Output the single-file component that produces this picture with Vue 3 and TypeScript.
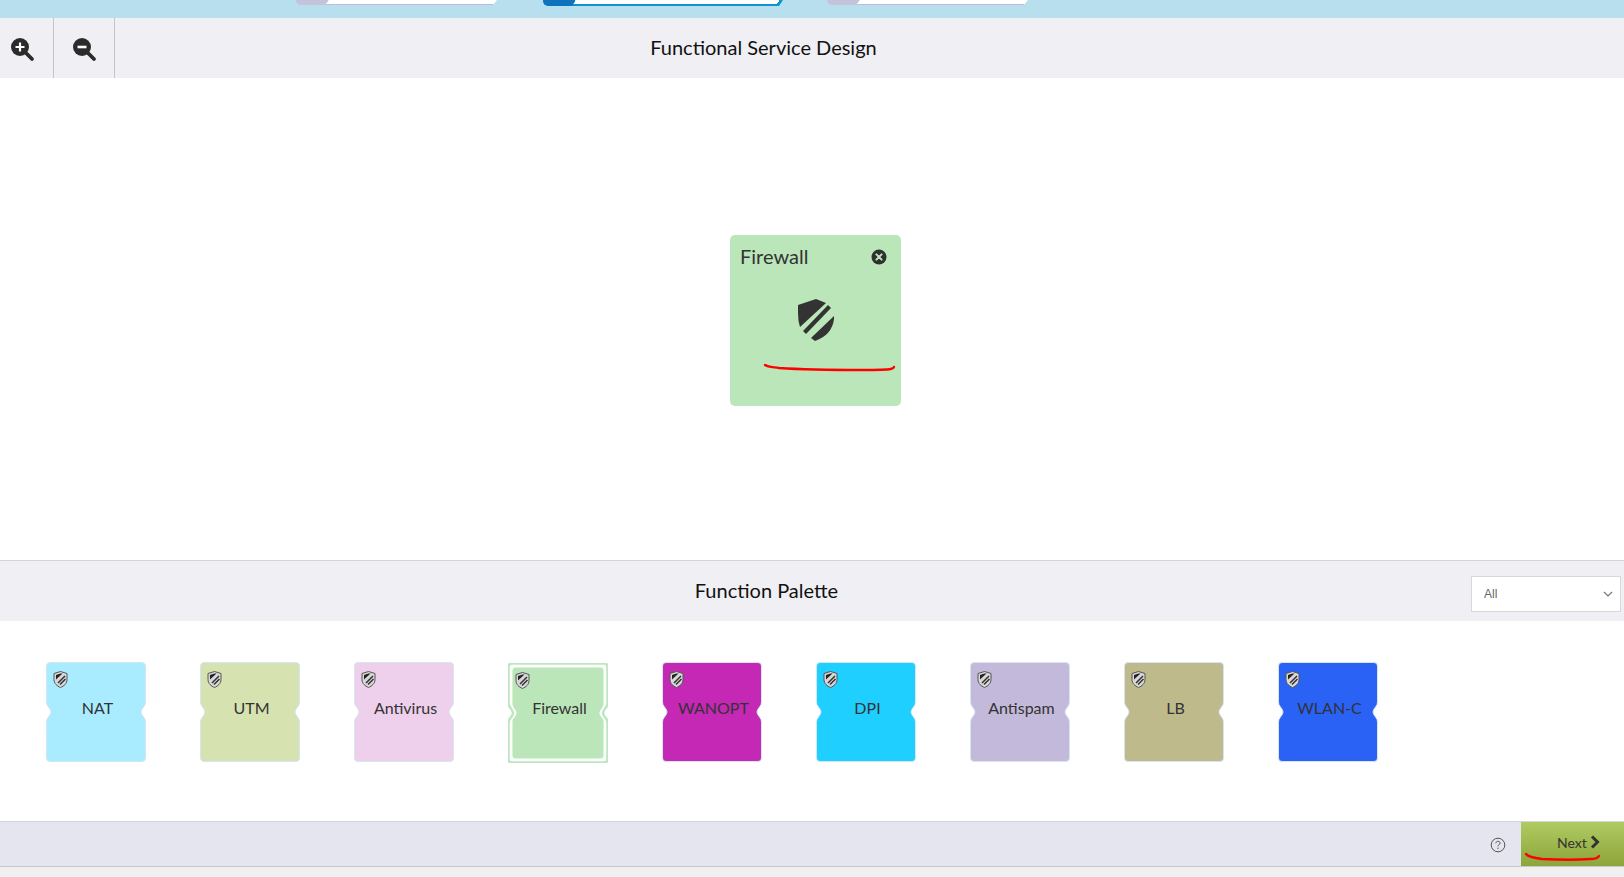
<template>
  <div class="page">
    <div class="topbar">
      <div class="step step-one"><span class="step-tag"></span><span class="step-body"></span></div>
      <div class="step step-two"><span class="step-tag"></span><span class="step-body"></span></div>
      <div class="step step-three"><span class="step-tag"></span><span class="step-body"></span></div>
    </div>

    <div class="toolbar">
      <button class="zoom-btn">
        <svg width="26" height="26" viewBox="0 0 26 26">
          <circle cx="10" cy="10" r="9" fill="#2b2b2b" />
          <path d="M16 16l6 6" stroke="#2b2b2b" stroke-width="3.8" stroke-linecap="round" />
          <path d="M10 5.5v9M5.5 10h9" stroke="#fff" stroke-width="2.2" />
        </svg>
      </button>
      <button class="zoom-btn">
        <svg width="26" height="26" viewBox="0 0 26 26">
          <circle cx="10" cy="10" r="9" fill="#2b2b2b" />
          <path d="M16 16l6 6" stroke="#2b2b2b" stroke-width="3.8" stroke-linecap="round" />
          <path d="M5.5 10h9" stroke="#fff" stroke-width="2.6" />
        </svg>
      </button>
      <h2 class="toolbar-title">Functional Service Design</h2>
    </div>

    <div class="canvas">
      <div class="node">
        <div class="node-head">
          <span>Firewall</span>
          <svg width="16" height="16" viewBox="0 0 16 16">
            <circle cx="8" cy="8" r="7.5" fill="#2f2f2f" />
            <path d="M5.4 5.4l5.2 5.2M10.6 5.4l-5.2 5.2" stroke="#bbe6b9" stroke-width="2" stroke-linecap="round" />
          </svg>
        </div>
        <svg class="node-shield" width="36" height="42" viewBox="0 0 36 42">
          <path d="M0 6L18 0l10 4L2 28Q0 22 0 14z" fill="#333" />
          <path d="M30 6l3 3L8 35l-3-3z" fill="#333" />
          <path d="M36 17L13 39l4 3Q34 36 36 20z" fill="#333" />
        </svg>
      </div>
    </div>

    <div class="palette-head">
      <h2 class="palette-title">Function Palette</h2>
      <div class="filter">
        <span>All</span>
        <svg width="10" height="6" viewBox="0 0 10 6">
          <path d="M1 1l4 4 4-4" fill="none" stroke="#777" stroke-width="1.2" />
        </svg>
      </div>
    </div>

    <div class="palette">
      <div
        v-for="fn in functions"
        :key="fn.name"
        class="tile"
        :class="{ selected: fn.selected }"
      >
        <svg class="tile-bg" width="100" height="100" viewBox="0 0 100 100">
          <template v-if="fn.selected">
            <path :d="tilePath" fill="#fff" stroke="#bde7c0" stroke-width="2.5" />
            <path
              :d="tilePath"
              :fill="fn.color"
              transform="translate(50 50) scale(.92) translate(-50 -50)"
            />
          </template>
          <path v-else :d="tilePath" :fill="fn.color" stroke="#d3e6f2" stroke-width="1" />
        </svg>
        <svg class="tile-icon" width="15" height="17" viewBox="0 0 15 17">
          <path d="M7.5.5l6.5 2v6c0 4-3 6.500-6.500 8C4 15 1 12.500 1 8.500v-6z" fill="#d8d8d8" stroke="#555" />
          <path d="M7.500 2.500L3 4v4.500l6.500-6z" fill="#222" />
          <path d="M12 5L5 12M12.500 8L7 13.500" stroke="#333" stroke-width="1.500" />
        </svg>
        <span class="tile-name">{{ fn.name }}</span>
      </div>
    </div>

    <div class="footer">
      <svg class="help" width="16" height="16" viewBox="0 0 16 16">
        <circle cx="8" cy="8" r="6.800" fill="none" stroke="#555" stroke-width="1" />
        <path d="M5.900 6.300C6 4.900 6.900 4.300 8 4.300c1.200 0 2.100.7 2.100 1.800 0 1.500-2.100 1.500-2.100 3.200" fill="none" stroke="#555" stroke-width="1" />
        <circle cx="8" cy="11.300" r=".7" fill="#555" />
      </svg>
      <button class="next-btn">
        Next
        <svg width="10" height="14" viewBox="0 0 10 14">
          <path d="M2 1.500L7.500 7 2 12.500" fill="none" stroke="#333" stroke-width="3" />
        </svg>
      </button>
    </div>
    <div class="bottom-strip"></div>

    <svg class="scribbles" width="1624" height="877" viewBox="0 0 1624 877">
      <path d="M765 365c3 2 8 2 14 3 30 2 60 2 84 2 12 0 22 0 28-1 2-1 3-1 3-2" />
      <path d="M1526 854c2 3 8 4 16 5 18 1 36 1 48 0 5 0 8-1 9-3" />
    </svg>
  </div>
</template>

<script setup lang="ts">
interface PaletteFunction {
  name: string
  color: string
  selected?: boolean
}

const tilePath =
  'M4 .5H96Q99.500 .5 99.500 4V40Q99.500 43 97.500 45 95 48 95 50 95 52 97.500 55 99.500 57 99.500 60V96Q99.500 99.500 96 99.500H4Q.5 99.500 .5 96V60Q.5 57 2.500 55 5 52 5 50 5 48 2.500 45 .5 43 .5 40V4Q.5 .5 4 .5Z'

const functions: PaletteFunction[] = [
  { name: 'NAT', color: '#a9ecff' },
  { name: 'UTM', color: '#d6e2b0' },
  { name: 'Antivirus', color: '#eecfec' },
  { name: 'Firewall', color: '#bbe6b9', selected: true },
  { name: 'WANOPT', color: '#c428b4' },
  { name: 'DPI', color: '#1ecfff' },
  { name: 'Antispam', color: '#c3b9da' },
  { name: 'LB', color: '#bfba8c' },
  { name: 'WLAN-C', color: '#2962f5' }
]
</script>

<style scoped>
.page {
  width: 1624px;
  height: 877px;
  position: relative;
  display: flex;
  flex-direction: column;
  overflow: hidden;
  background: #fff;
  font-family: Lato, "Liberation Sans", sans-serif;
  color: #333;
}

.topbar {
  height: 18px;
  flex-shrink: 0;
  background: #b8dfee;
  display: flex;
  align-items: flex-start;
}

.step {
  display: flex;
  height: 5px;
}

.step-one {
  width: 201px;
  margin-left: 296px;
}

.step-two {
  width: 240px;
  height: 6px;
  margin-left: 46px;
}

.step-three {
  width: 201px;
  margin-left: 44px;
}

.step-tag {
  width: 32px;
  background: #c3c3dc;
  border-bottom-left-radius: 5px;
}

.step-two .step-tag {
  background: #0f72bd;
}

.step-body {
  flex: 1;
  background: #fff;
  margin-left: -3px;
  border-bottom: 1px solid #c3b9da;
  clip-path: polygon(4px 0, 100% 0, calc(100% - 4px) 100%, 0 100%);
}

.step-two .step-body {
  background: linear-gradient(129deg, #fff calc(100% - 5px), #0b93d5 calc(100% - 5px));
  border-bottom: 2px solid #0b93d5;
}

.toolbar {
  height: 60px;
  flex-shrink: 0;
  display: flex;
  background: #efeff4;
}

.zoom-btn {
  width: 54px;
  padding: 4px 8px 0 0;
  border: none;
  border-right: 1px solid #c4c4c4;
  background: none;
  display: flex;
  align-items: center;
  justify-content: center;
}

.zoom-btn + .zoom-btn {
  width: 61px;
  padding: 4px 0 0 2px;
}

.toolbar-title {
  flex: 1;
  margin: -2px 212px 0 0;
  align-self: center;
  text-align: center;
  font-size: 20px;
  font-weight: 400;
  color: #111;
}

.canvas {
  height: 482px;
  flex-shrink: 0;
  position: relative;
}

.node {
  position: absolute;
  left: 730px;
  top: 157px;
  width: 171px;
  height: 171px;
  box-sizing: border-box;
  padding: 9px 14px 0 10px;
  border-radius: 5px;
  background: #bbe6b9;
  display: flex;
  flex-direction: column;
}

.node-head {
  display: flex;
  align-items: center;
  justify-content: space-between;
  font-size: 20px;
  line-height: 24px;
}

.node-head svg {
  margin-top: 2px;
}

.node-shield {
  margin: 31px 0 0 58px;
}

.palette-head {
  height: 61px;
  flex-shrink: 0;
  box-sizing: border-box;
  border-top: 1px solid #d4d4d8;
  background: #efeff4;
  display: flex;
  align-items: center;
}

.palette-title {
  flex: 1;
  margin: -2px 3px 0 0;
  padding-left: 65px;
  text-align: center;
  font-size: 20px;
  font-weight: 400;
  color: #111;
}

.filter {
  width: 150px;
  height: 36px;
  margin: 6px 3px 0 0;
  box-sizing: border-box;
  padding: 0 7px 0 12px;
  border: 1px solid #d8d8dc;
  background: #fff;
  display: flex;
  align-items: center;
  justify-content: space-between;
  font-family: "Liberation Sans", Arial, sans-serif;
  font-size: 12px;
  color: #666;
}

.palette {
  height: 200px;
  flex-shrink: 0;
  box-sizing: border-box;
  padding: 41px 0 0 45.5px;
  display: flex;
  gap: 54px;
}

.tile {
  width: 100px;
  height: 100px;
  position: relative;
  display: flex;
  align-items: center;
  justify-content: center;
  font-size: 16px;
}

.tile.selected {
  margin-top: 1px;
}

.tile-bg {
  position: absolute;
  inset: 0;
}

.tile-icon {
  position: absolute;
  left: 7px;
  top: 9px;
}

.tile-name {
  position: relative;
  top: -5px;
  left: 2px;
}

.selected .tile-name {
  top: -6px;
}

.footer {
  height: 45px;
  flex-shrink: 0;
  box-sizing: border-box;
  background: #e4e5ee;
  border-top: 1px solid #d4d4d8;
  display: flex;
  align-items: stretch;
  justify-content: flex-end;
}

.help {
  align-self: center;
  margin: 1px 15px 0 0;
}

.next-btn {
  width: 103px;
  padding: 0 0 4px 36px;
  border: none;
  background: linear-gradient(#afcb62, #8da53a);
  display: flex;
  align-items: center;
  gap: 3px;
  font-family: inherit;
  font-size: 14px;
  color: #333;
}

.bottom-strip {
  flex: 1;
  background: #f0f0f0;
  border-top: 1px solid #c8c8c8;
}

.scribbles {
  position: absolute;
  inset: 0;
  pointer-events: none;
}

.scribbles path {
  fill: none;
  stroke: #f00;
  stroke-width: 2.4;
  stroke-linecap: round;
}
</style>

<style>
body {
  margin: 0;
  overflow: hidden;
}
</style>
